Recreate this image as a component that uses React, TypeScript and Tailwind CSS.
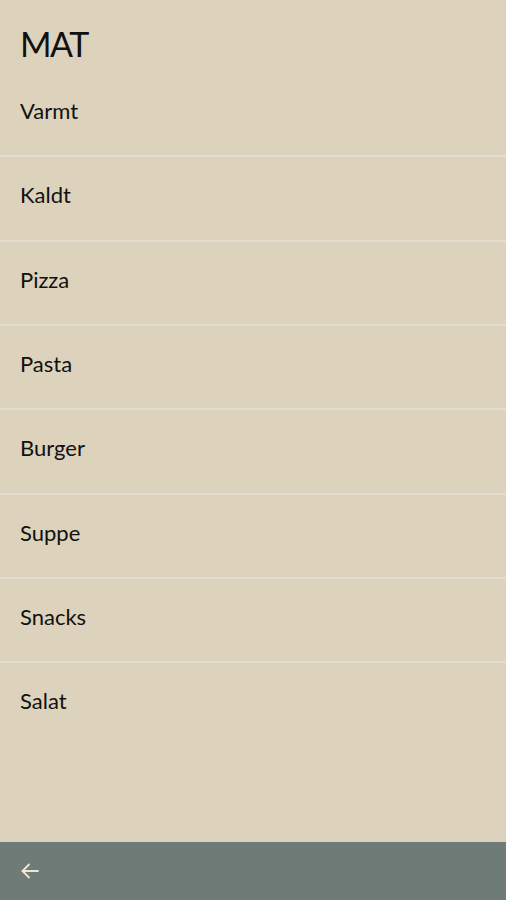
import React from "react";

const items = ["Varmt", "Kaldt", "Pizza", "Pasta", "Burger", "Suppe", "Snacks", "Salat"];

export default function App() {
  return (
    <div
      className="flex h-[900px] w-full flex-col bg-[#ddd2bb] text-[#111111]"
      style={{ fontFamily: "Lato, 'Noto Sans', sans-serif" }}
    >
      <div className="flex-1">
        <div className="h-[73px] pl-[20px] pt-[24px] text-[34px] leading-[40px] tracking-[-1.5px]">MAT</div>
        <div className="flex flex-col">
          {items.map((it, i) => (
            <div key={it} className="flex flex-col">
              <div className="h-[82.33px] pl-[20px] pt-[25px] text-[22px] leading-[26px]">{it}</div>
              {i < items.length - 1 && <div className="h-[2px] bg-[#e2dcd1]" />}
            </div>
          ))}
        </div>
      </div>
      <div className="flex h-[58px] items-center bg-[#6f7b76] pl-[20px]">
        <svg width="20" height="20" viewBox="0 0 20 20" fill="none" stroke="#f1e6d3" strokeWidth="1.8" strokeLinecap="round" strokeLinejoin="round">
          <path d="M18 10H2.5" />
          <path d="M9 3.5L2.5 10L9 16.5" />
        </svg>
      </div>
    </div>
  );
}
